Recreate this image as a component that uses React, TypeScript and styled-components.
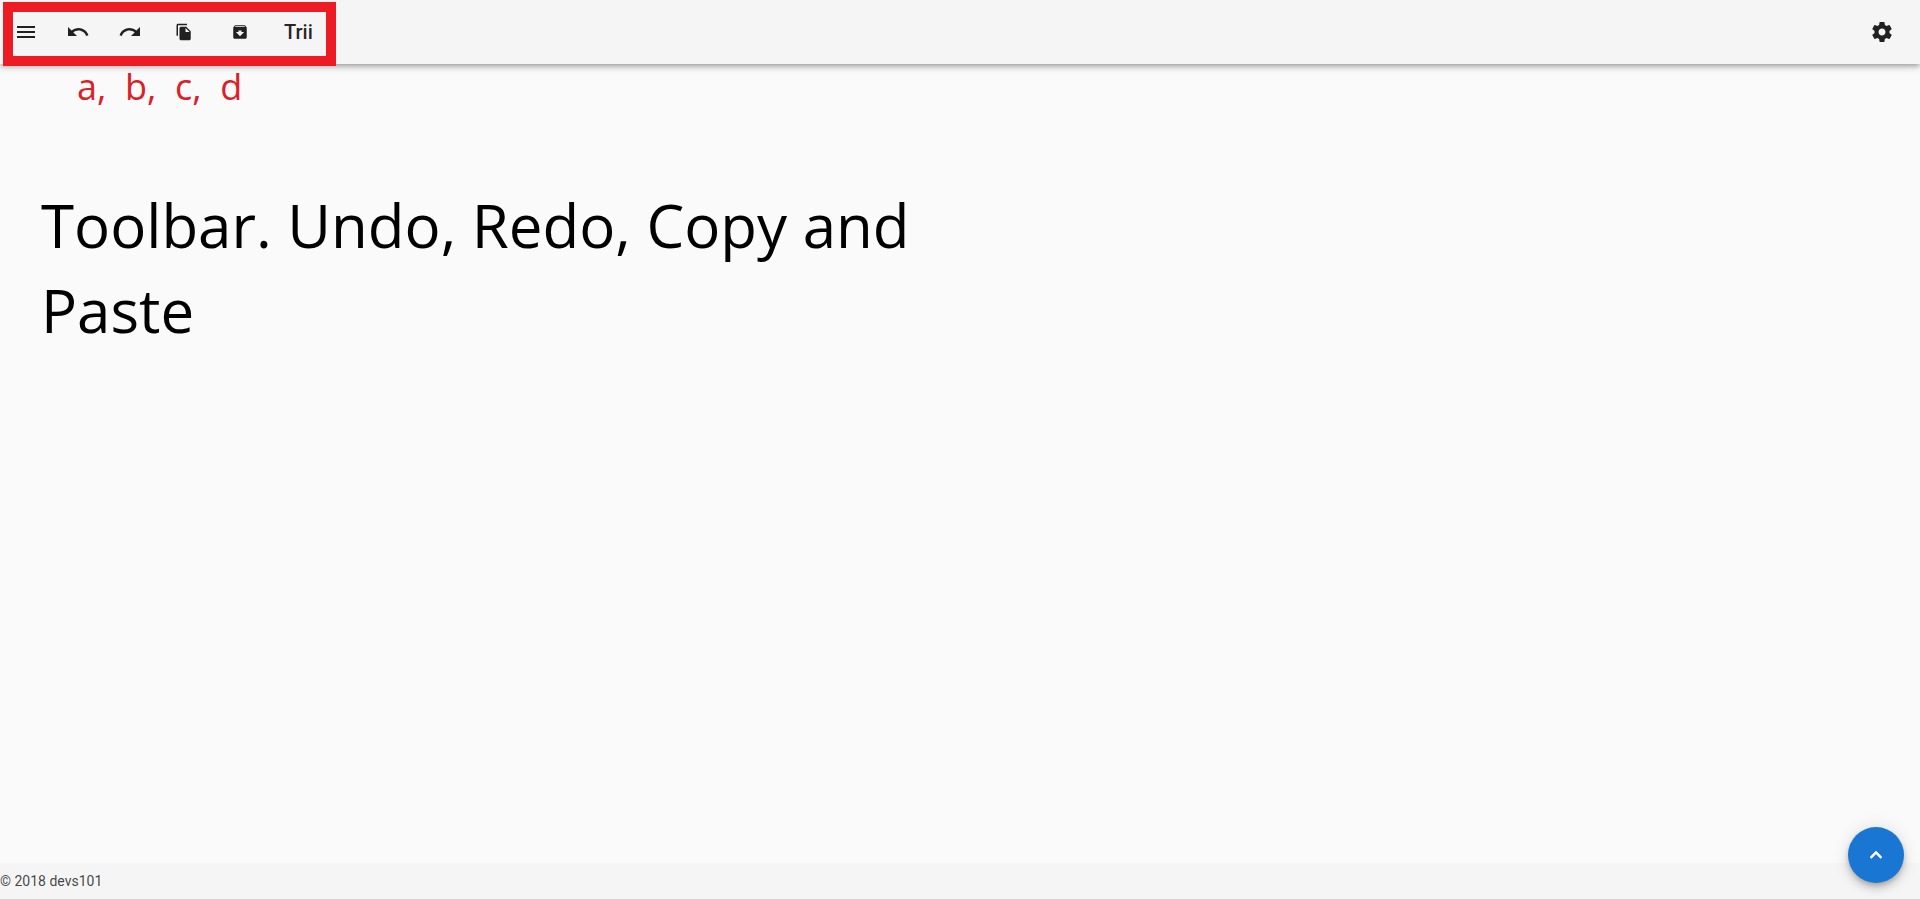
import React from "react";
import styled, { createGlobalStyle } from "styled-components";

const GlobalStyle = createGlobalStyle`
  *, *::before, *::after { box-sizing: border-box; }
  body {
    margin: 0;
    background: #fafafa;
    color: rgba(0, 0, 0, 0.87);
    font-family: Roboto, "Liberation Sans", sans-serif;
  }
`;

const Page = styled.div`
  display: flex;
  flex-direction: column;
  min-height: 100vh;
`;

const Toolbar = styled.header`
  position: relative;
  display: flex;
  align-items: center;
  height: 64px;
  padding: 0 26px 0 14px;
  background: #f5f5f5;
  box-shadow: 0 2px 4px -1px rgba(0, 0, 0, 0.2), 0 4px 5px 0 rgba(0, 0, 0, 0.14),
    0 1px 10px 0 rgba(0, 0, 0, 0.12);
`;

const Actions = styled.nav`
  display: flex;
  align-items: center;
  gap: 28px;
`;

const IconButton = styled.button<{ $wide?: boolean }>`
  display: flex;
  align-items: center;
  justify-content: center;
  width: ${({ $wide }) => ($wide ? "28px" : "24px")};
  height: 36px;
  padding: 0;
  border: 0;
  background: none;
  color: #212121;
  cursor: pointer;
`;

const Brand = styled.h1`
  margin: 0 auto 0 2px;
  padding-left: 28px;
  font-size: 20px;
  line-height: 32px;
  font-weight: 500;
`;

const Highlight = styled.div`
  position: absolute;
  top: 2px;
  left: 3px;
  width: 333px;
  height: 64px;
  border: 10px solid #ed1c24;
  pointer-events: none;
`;

const Main = styled.main`
  flex: 1;
  font-family: "Open Sans", "Noto Sans", sans-serif;
`;

const Labels = styled.p`
  margin: 0;
  padding-left: 77px;
  color: #da2128;
  font-size: 36px;
  line-height: 46px;
  white-space: pre;
`;

const Caption = styled.h2`
  max-width: 960px;
  margin: 73px 0 0;
  padding-left: 41px;
  color: #000;
  font-size: 60px;
  line-height: 85px;
  font-weight: 400;
`;

const Footer = styled.footer`
  display: flex;
  align-items: center;
  height: 36px;
  background: #f5f5f5;
  color: rgba(0, 0, 0, 0.74);
  font-size: 14px;
  line-height: 20px;
`;

const ScrollTop = styled.button`
  position: fixed;
  right: 16px;
  bottom: 16px;
  display: flex;
  align-items: center;
  justify-content: center;
  width: 56px;
  height: 56px;
  padding: 0;
  border: 0;
  border-radius: 50%;
  background: #1976d2;
  color: #fff;
  box-shadow: 0 3px 5px -1px rgba(0, 0, 0, 0.2), 0 6px 10px 0 rgba(0, 0, 0, 0.14),
    0 1px 18px 0 rgba(0, 0, 0, 0.12);
  cursor: pointer;

  path {
    stroke: currentColor;
    stroke-width: 0.6;
  }
`;

const paths = {
  menu: "M3 18h18v-2H3v2zm0-5h18v-2H3v2zm0-7v2h18V6H3z",
  undo: "M12.5 8c-2.65 0-5.05.99-6.9 2.6L2 7v9h9l-3.62-3.62c1.39-1.16 3.16-1.88 5.12-1.88 3.54 0 6.55 2.31 7.6 5.5l2.37-.78C21.08 11.03 17.15 8 12.5 8z",
  redo: "M18.4 10.6C16.55 8.99 14.15 8 11.5 8c-4.65 0-8.58 3.03-9.96 7.22L3.9 16c1.05-3.19 4.05-5.5 7.6-5.5 1.95 0 3.73.72 5.12 1.88L13 16h9V7l-3.6 3.6z",
  copy: "M16 1H4c-1.1 0-2 .9-2 2v14h2V3h12V1zm-1 4l6 6v10c0 1.1-.9 2-2 2H7.99C6.89 23 6 22.1 6 21l.01-14c0-1.1.89-2 1.99-2h7zm-1 7h5.5L14 6.5V12z",
  paste: "M20.54 5.23l-1.39-1.68C18.88 3.21 18.47 3 18 3H6c-.47 0-.88.21-1.16.55L3.46 5.23C3.17 5.57 3 6.02 3 6.5V19c0 1.1.9 2 2 2h14c1.1 0 2-.9 2-2V6.5c0-.48-.17-.93-.46-1.27zM12 17.5L6.5 12H10v-2h4v2h3.5L12 17.5zM5.12 5l.81-1h12l.94 1H5.12z",
  settings: "M19.43 12.98c.04-.32.07-.64.07-.98s-.03-.66-.07-.98l2.11-1.65c.19-.15.24-.42.12-.64l-2-3.46c-.12-.22-.39-.3-.61-.22l-2.49 1c-.52-.4-1.08-.73-1.69-.98l-.38-2.65C14.46 2.18 14.25 2 14 2h-4c-.25 0-.46.18-.49.42l-.38 2.65c-.61.25-1.17.59-1.69.98l-2.49-1c-.23-.09-.49 0-.61.22l-2 3.46c-.13.22-.07.49.12.64l2.11 1.65c-.04.32-.07.65-.07.98s.03.66.07.98l-2.11 1.65c-.19.15-.24.42-.12.64l2 3.46c.12.22.39.3.61.22l2.49-1c.52.4 1.08.73 1.69.98l.38 2.65c.03.24.24.42.49.42h4c.25 0 .46-.18.49-.42l.38-2.65c.61-.25 1.17-.59 1.69-.98l2.49 1c.23.09.49 0 .61-.22l2-3.46c.12-.22.07-.49-.12-.64l-2.11-1.65zM12 15.5c-1.93 0-3.5-1.57-3.5-3.5s1.57-3.5 3.5-3.5 3.5 1.57 3.5 3.5-1.57 3.5-3.5 3.5z",
  up: "M7.41 15.41L12 10.83l4.59 4.58L18 14l-6-6-6 6z",
};

function Icon({ name, size = 24 }: { name: keyof typeof paths; size?: number }) {
  return (
    <svg width={size} height={size} viewBox="0 0 24 24" fill="currentColor" aria-hidden="true">
      <path d={paths[name]} />
    </svg>
  );
}

export default function App() {
  return (
    <>
      <GlobalStyle />
      <Page>
        <Toolbar>
          <Actions aria-label="Toolbar">
            <IconButton aria-label="Menu"><Icon name="menu" /></IconButton>
            <IconButton aria-label="Undo"><Icon name="undo" /></IconButton>
            <IconButton aria-label="Redo"><Icon name="redo" /></IconButton>
            <IconButton $wide aria-label="Copy"><Icon name="copy" size={18} /></IconButton>
            <IconButton $wide aria-label="Paste"><Icon name="paste" size={18} /></IconButton>
          </Actions>
          <Brand>Trii</Brand>
          <IconButton aria-label="Settings"><Icon name="settings" /></IconButton>
          <Highlight />
        </Toolbar>
        <Main>
          <Labels>{"a,  b,  c,  d"}</Labels>
          <Caption>Toolbar. Undo, Redo, Copy and Paste</Caption>
        </Main>
        <Footer>© 2018 devs101</Footer>
      </Page>
      <ScrollTop aria-label="Back to top"><Icon name="up" /></ScrollTop>
    </>
  );
}
